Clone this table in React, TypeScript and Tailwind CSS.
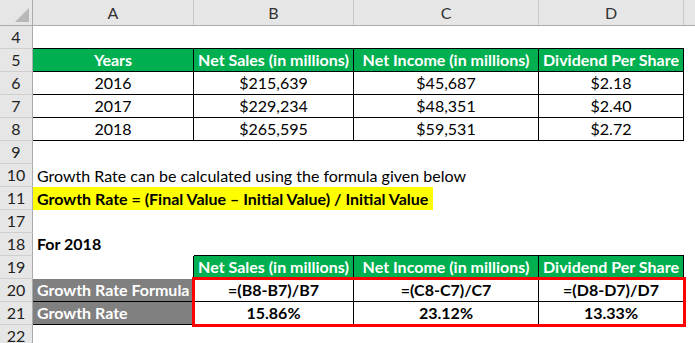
import React from "react";

function RH({ n }: { n: string }) {
  return (
    <div className="w-[33px] h-[23px] shrink-0 bg-[#e6e6e6] border-b border-r border-b-[#cfcfcf] border-r-[#ababab] flex items-center justify-center text-[16px] leading-none text-[#222]">
      {n}
    </div>
  );
}

function Row({ n, children }: { n: string; children?: React.ReactNode }) {
  return (
    <div className="flex h-[23px]">
      <RH n={n} />
      {children}
    </div>
  );
}

const w = ["w-[161px]", "w-[160px]", "w-[185px]", "w-[145px]"];

function Cell({
  i,
  cls = "",
  children,
}: {
  i: number;
  cls?: string;
  children?: React.ReactNode;
}) {
  return (
    <div className={`${w[i]} h-[23px] shrink-0 flex items-center justify-center whitespace-nowrap ${cls}`}>
      {children}
    </div>
  );
}

const T = "border-r border-b border-black";
const G = "bg-[#00b050] text-white font-bold border-r border-b border-black";

export default function App() {
  const data = [
    ["6", "2016", "$215,639", "$45,687", "$2.18"],
    ["7", "2017", "$229,234", "$48,351", "$2.40"],
    ["8", "2018", "$265,595", "$59,531", "$2.72"],
  ];
  return (
    <div className="w-[695px] h-[343px] overflow-hidden bg-white font-['Lato','Open_Sans',sans-serif] text-[16px] text-black leading-none">
      {/* column header */}
      <div className="flex h-[26px] bg-[#e6e6e6] border-b border-[#ababab] text-[#333]">
        <div className="w-[33px] shrink-0 border-r border-[#ababab] relative">
          <svg className="absolute right-[3px] bottom-[3px]" width="14" height="14" viewBox="0 0 14 14">
            <polygon points="14,0 14,14 0,14" fill="#b8b8b8" />
          </svg>
        </div>
        {["A", "B", "C", "D"].map((c, i) => (
          <div key={c} className={`${w[i]} shrink-0 border-r border-[#c8c8c8] flex items-center justify-center`}>
            {c}
          </div>
        ))}
        <div className="flex-1" />
      </div>

      <Row n="4">
        <Cell i={0} cls="border-b border-black" />
        <Cell i={1} cls="border-b border-black" />
        <Cell i={2} cls="border-b border-black" />
        <Cell i={3} cls="border-b border-black" />
      </Row>
      <Row n="5">
        <Cell i={0} cls={G}>Years</Cell>
        <Cell i={1} cls={G}>Net Sales (in millions)</Cell>
        <Cell i={2} cls={G}>Net Income (in millions)</Cell>
        <Cell i={3} cls={G}>Dividend Per Share</Cell>
      </Row>
      {data.map((r) => (
        <Row key={r[0]} n={r[0]}>
          <Cell i={0} cls={T}>{r[1]}</Cell>
          <Cell i={1} cls={T}>{r[2]}</Cell>
          <Cell i={2} cls={T}>{r[3]}</Cell>
          <Cell i={3} cls={T}>{r[4]}</Cell>
        </Row>
      ))}
      <Row n="9" />
      <Row n="10">
        <div className="flex items-center pl-[4px] whitespace-nowrap">
          Growth Rate can be calculated using the formula given below
        </div>
      </Row>
      <Row n="11">
        <div className="w-[400px] h-[23px] bg-[#ffff00] flex items-center pl-[4px] font-bold whitespace-nowrap">
          Growth Rate = (Final Value – Initial Value) / Initial Value
        </div>
      </Row>
      <Row n="17" />
      <Row n="18">
        <div className="w-[161px] shrink-0 border-b border-transparent flex items-center pl-[4px] font-bold">For 2018</div>
        <Cell i={1} cls="border-b border-black" />
        <Cell i={2} cls="border-b border-black" />
        <Cell i={3} cls="border-b border-black" />
      </Row>
      <Row n="19">
        <Cell i={0} cls="border-r border-black" />
        <Cell i={1} cls={G}>Net Sales (in millions)</Cell>
        <Cell i={2} cls={G}>Net Income (in millions)</Cell>
        <Cell i={3} cls={G}>Dividend Per Share</Cell>
      </Row>
      <div className="flex">
        <div className="flex flex-col">
          <RH n="20" />
          <RH n="21" />
        </div>
        <div className="flex flex-col">
          <div className="w-[161px] h-[23px] bg-[#808080] text-white font-bold border-r border-b border-black flex items-center pl-[4px] whitespace-nowrap">
            Growth Rate Formula
          </div>
          <div className="w-[161px] h-[23px] bg-[#808080] text-white font-bold border-r border-b border-black flex items-center pl-[4px] whitespace-nowrap">
            Growth Rate
          </div>
        </div>
        <div className="flex flex-col outline-[3px] outline-solid outline-[#ff0000] -outline-offset-1 font-bold">
          <div className="flex">
            <Cell i={1} cls={T}>=(B8-B7)/B7</Cell>
            <Cell i={2} cls={T}>=(C8-C7)/C7</Cell>
            <Cell i={3} cls={T}>=(D8-D7)/D7</Cell>
          </div>
          <div className="flex">
            <Cell i={1} cls={T}>15.86%</Cell>
            <Cell i={2} cls={T}>23.12%</Cell>
            <Cell i={3} cls={T}>13.33%</Cell>
          </div>
        </div>
      </div>
      <Row n="22" />
    </div>
  );
}
